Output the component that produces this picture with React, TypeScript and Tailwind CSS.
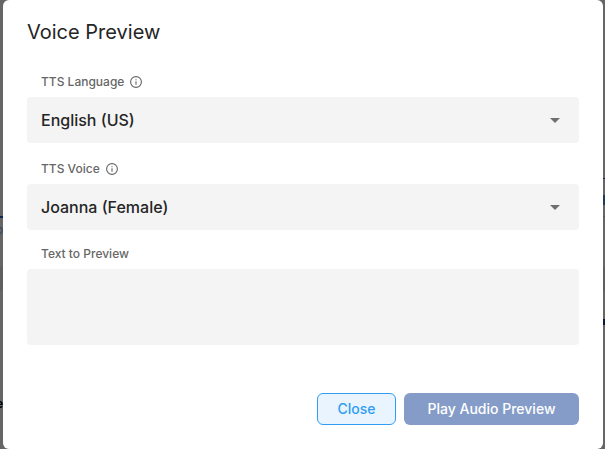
import { useState } from "react";
import type { ReactNode } from "react";

const controlClass =
  "block w-full rounded-[4px] border-0 bg-[#f4f4f4] px-3.5 text-base font-medium text-[#252525] outline-none";

function InfoIcon() {
  return (
    <svg
      viewBox="0 0 12 12"
      className="size-3 shrink-0"
      fill="none"
      stroke="#666666"
      aria-hidden="true"
    >
      <circle cx="6" cy="6" r="5.4" strokeWidth="1.1" />
      <path d="M6 5.2v3.5M6 3.2v1.1" strokeWidth="1.1" />
    </svg>
  );
}

function FieldLabel({ id, children, info }: { id: string; children: ReactNode; info?: boolean }) {
  return (
    <div className="flex h-4 items-center gap-1.5 pl-3.5">
      <label htmlFor={id} className="text-xs font-medium text-[#666666]">
        {children}
      </label>
      {info && <InfoIcon />}
    </div>
  );
}

function SelectField({ id, label, options }: { id: string; label: string; options: string[] }) {
  return (
    <div className="flex flex-col gap-[7px]">
      <FieldLabel id={id} info>
        {label}
      </FieldLabel>
      <div className="relative">
        <select id={id} className={`${controlClass} h-[46px] appearance-none`}>
          {options.map((option) => (
            <option key={option}>{option}</option>
          ))}
        </select>
        <svg
          viewBox="0 0 10 5"
          className="pointer-events-none absolute top-[21px] right-[19px] h-[5px] w-2.5"
          fill="#6f6f6f"
          aria-hidden="true"
        >
          <path d="M0 0h10L5 5z" />
        </svg>
      </div>
    </div>
  );
}

function PageBehind() {
  return (
    <div className="absolute inset-0 overflow-hidden text-xs" aria-hidden="true">
      <div className="absolute top-[216px] left-0 h-0.5 w-[3px] bg-[#0b2554]" />
      <div className="absolute top-[267px] left-0 h-6 w-full bg-[#5f5f5f]" />
      <span className="absolute top-[222px] -left-1 text-[#33475b]">o</span>
      <span className="absolute top-[396px] -left-1 font-bold text-black">e</span>
      <div className="absolute top-[178px] right-0 h-px w-0.5 bg-[#17204f]" />
      <div className="absolute top-[195px] right-0 h-2.5 w-0.5 bg-[#21385f]" />
      <div className="absolute top-[216px] right-0 h-px w-0.5 bg-[#6b5040]" />
      <div className="absolute top-[319px] right-0 h-1.5 w-0.5 bg-[#0b1740]" />
    </div>
  );
}

export default function App() {
  const [text, setText] = useState("");

  return (
    <div className="relative min-h-screen bg-[#666666] pr-0.5 pl-[3px] font-['Inter','Open_Sans',sans-serif]">
      <PageBehind />
      <div
        role="dialog"
        aria-labelledby="dialog-title"
        className="relative flex flex-col rounded-md bg-white px-6 pt-[18px] pb-6"
      >
        <h2 id="dialog-title" className="text-xl leading-7 text-[#252525]">
          Voice Preview
        </h2>
        <div className="mt-7 flex flex-col">
          <SelectField id="language" label="TTS Language" options={["English (US)", "English (UK)"]} />
          <div className="mt-[18px]">
            <SelectField id="voice" label="TTS Voice" options={["Joanna (Female)", "Matthew (Male)"]} />
          </div>
          <div className="mt-4 flex flex-col gap-[7px]">
            <FieldLabel id="preview-text">Text to Preview</FieldLabel>
            <textarea
              id="preview-text"
              value={text}
              onChange={(event) => setText(event.target.value)}
              className={`${controlClass} h-[76px] resize-none py-3`}
            />
          </div>
        </div>
        <div className="mt-12 flex justify-end gap-2">
          <button
            type="button"
            className="h-8 w-[79px] rounded-md border border-[#2f9df4] bg-[#eaf4fe] text-sm font-medium text-[#2f9df4]"
          >
            Close
          </button>
          <button
            type="button"
            disabled={text === ""}
            className="h-8 w-[175px] rounded-md bg-[#859cc8] text-sm font-medium text-white"
          >
            Play Audio Preview
          </button>
        </div>
      </div>
    </div>
  );
}
